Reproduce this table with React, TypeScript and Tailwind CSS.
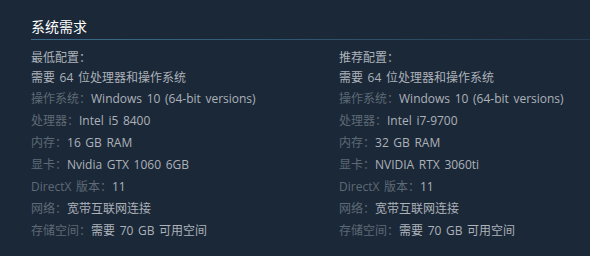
import React from 'react';

interface Req {
  label: string;
  value: string;
}

const minimum: Req[] = [
  { label: '操作系统：', value: 'Windows 10 (64-bit versions)' },
  { label: '处理器：', value: 'Intel i5 8400' },
  { label: '内存：', value: '16 GB RAM' },
  { label: '显卡：', value: 'Nvidia GTX 1060 6GB' },
  { label: 'DirectX 版本：', value: '11' },
  { label: '网络：', value: '宽带互联网连接' },
  { label: '存储空间：', value: '需要 70 GB 可用空间' },
];

const recommended: Req[] = [
  { label: '操作系统：', value: 'Windows 10 (64-bit versions)' },
  { label: '处理器：', value: 'Intel i7-9700' },
  { label: '内存：', value: '32 GB RAM' },
  { label: '显卡：', value: 'NVIDIA RTX 3060ti' },
  { label: 'DirectX 版本：', value: '11' },
  { label: '网络：', value: '宽带互联网连接' },
  { label: '存储空间：', value: '需要 70 GB 可用空间' },
];

const Column: React.FC<{ title: string; items: Req[] }> = ({ title, items }) => (
  <div className="w-[308px] shrink-0">
    <div className="leading-[20px] text-[#acb2b8]">{title}</div>
    <ul>
      <li className="leading-[20px] text-[#acb2b8]">需要 64 位处理器和操作系统</li>
      {items.map((item, i) => (
        <li key={i} className="leading-[22px] whitespace-nowrap">
          <span className="text-[#5e6a75]">{item.label}</span>
          <span className="text-[#acb2b8]">{item.value}</span>
        </li>
      ))}
    </ul>
  </div>
);

const App: React.FC = () => {
  return (
    <div
      className="w-[590px] h-[256px] bg-[#1b2838] pl-[31px] pt-[18px] overflow-hidden text-[12px] [word-spacing:1.5px]"
      style={{ fontFamily: '"Open Sans", "Noto Sans CJK SC", sans-serif' }}
    >
      <h2 className="text-[14px] leading-[18px] text-white">系统需求</h2>
      <div className="mt-[3px] h-px bg-gradient-to-r from-[#3b6e8c] to-[#3b6e8c]/30" />
      <div className="mt-[8px] flex">
        <Column title="最低配置：" items={minimum} />
        <Column title="推荐配置：" items={recommended} />
      </div>
    </div>
  );
};

export default App;
